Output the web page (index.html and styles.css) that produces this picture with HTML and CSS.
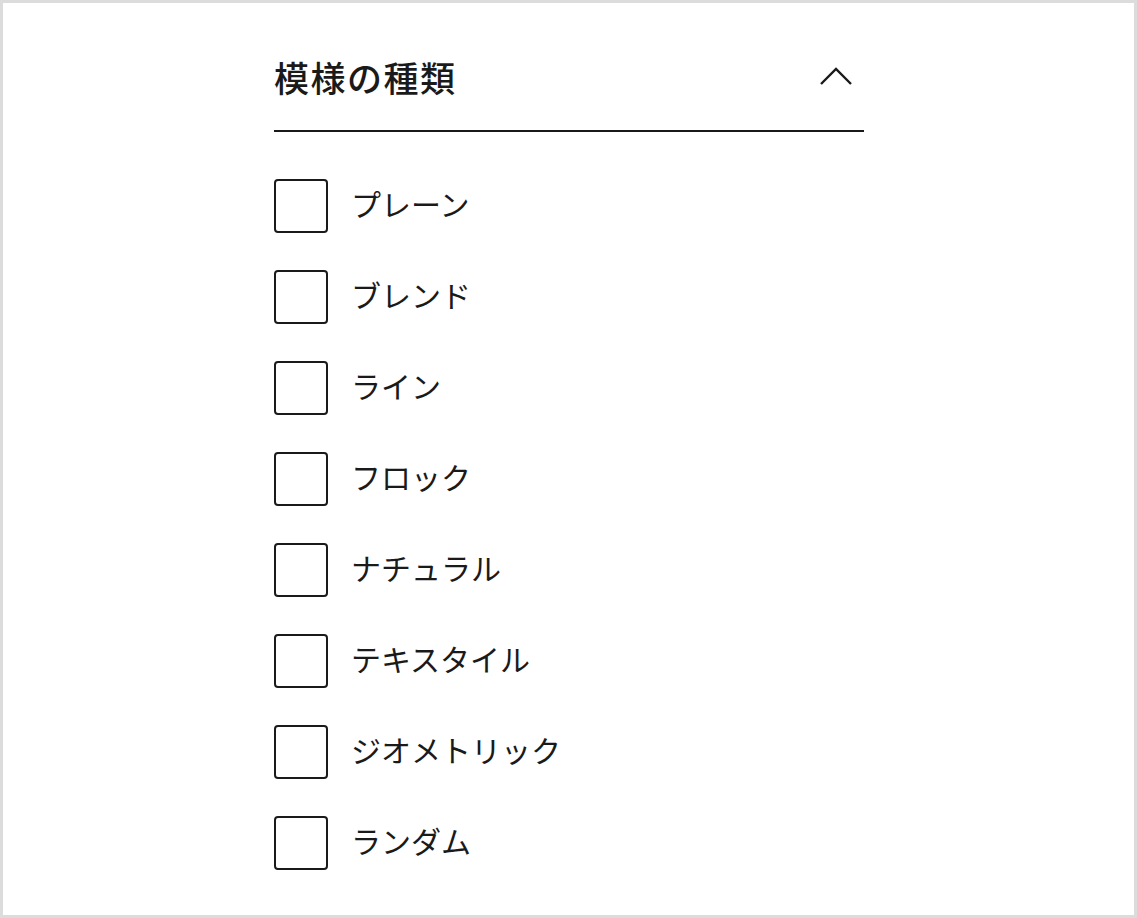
FILE: index.html
```html
<!DOCTYPE html>
<html lang="ja">
<head>
<meta charset="utf-8">
<link rel="stylesheet" href="styles.css">
</head>
<body>
<div class="frame">
  <section class="filter">
    <header class="filter-head">
      <h2 class="filter-title">模様の種類</h2>
      <svg class="chevron" width="34" height="20" viewBox="0 0 34 20" aria-hidden="true">
        <polyline points="2,18 17,3 32,18" fill="none" stroke="#1a1a1a" stroke-width="2.4"/>
      </svg>
    </header>
    <ul class="options">
      <li class="option"><span class="box"></span><span class="label">プレーン</span></li>
      <li class="option"><span class="box"></span><span class="label">ブレンド</span></li>
      <li class="option"><span class="box"></span><span class="label">ライン</span></li>
      <li class="option"><span class="box"></span><span class="label">フロック</span></li>
      <li class="option"><span class="box"></span><span class="label">ナチュラル</span></li>
      <li class="option"><span class="box"></span><span class="label">テキスタイル</span></li>
      <li class="option"><span class="box"></span><span class="label">ジオメトリック</span></li>
      <li class="option"><span class="box"></span><span class="label">ランダム</span></li>
    </ul>
  </section>
</div>
</body>
</html>
```
FILE: styles.css
```css
html, body {
  margin: 0;
  padding: 0;
  background: #ffffff;
}
body {
  font-family: "Noto Sans CJK JP", "Noto Sans", sans-serif;
  color: #1a1a1a;
}
.frame {
  box-sizing: border-box;
  width: 1137px;
  height: 918px;
  border: 3px solid #dcdcdc;
  padding-left: 271px;
}
.filter {
  width: 590px;
}
.filter-head {
  display: flex;
  align-items: center;
  justify-content: space-between;
  padding-top: 50px;
  padding-bottom: 29px;
  border-bottom: 2px solid #1a1a1a;
}
.filter-title {
  margin: 0;
  font-size: 35px;
  line-height: 48px;
  font-weight: 500;
  letter-spacing: 1.5px;
}
.chevron {
  margin-right: 11px;
  margin-top: -2px;
}
.options {
  list-style: none;
  margin: 47px 0 0;
  padding: 0;
  display: flex;
  flex-direction: column;
  gap: 37px;
}
.option {
  display: flex;
  align-items: center;
  gap: 23px;
  height: 54px;
}
.box {
  box-sizing: border-box;
  width: 54px;
  height: 54px;
  border: 2px solid #1a1a1a;
  border-radius: 4px;
  flex: none;
}
.label {
  font-size: 30px;
  line-height: 40px;
  font-weight: 400;
  padding-bottom: 6px;
}
```
